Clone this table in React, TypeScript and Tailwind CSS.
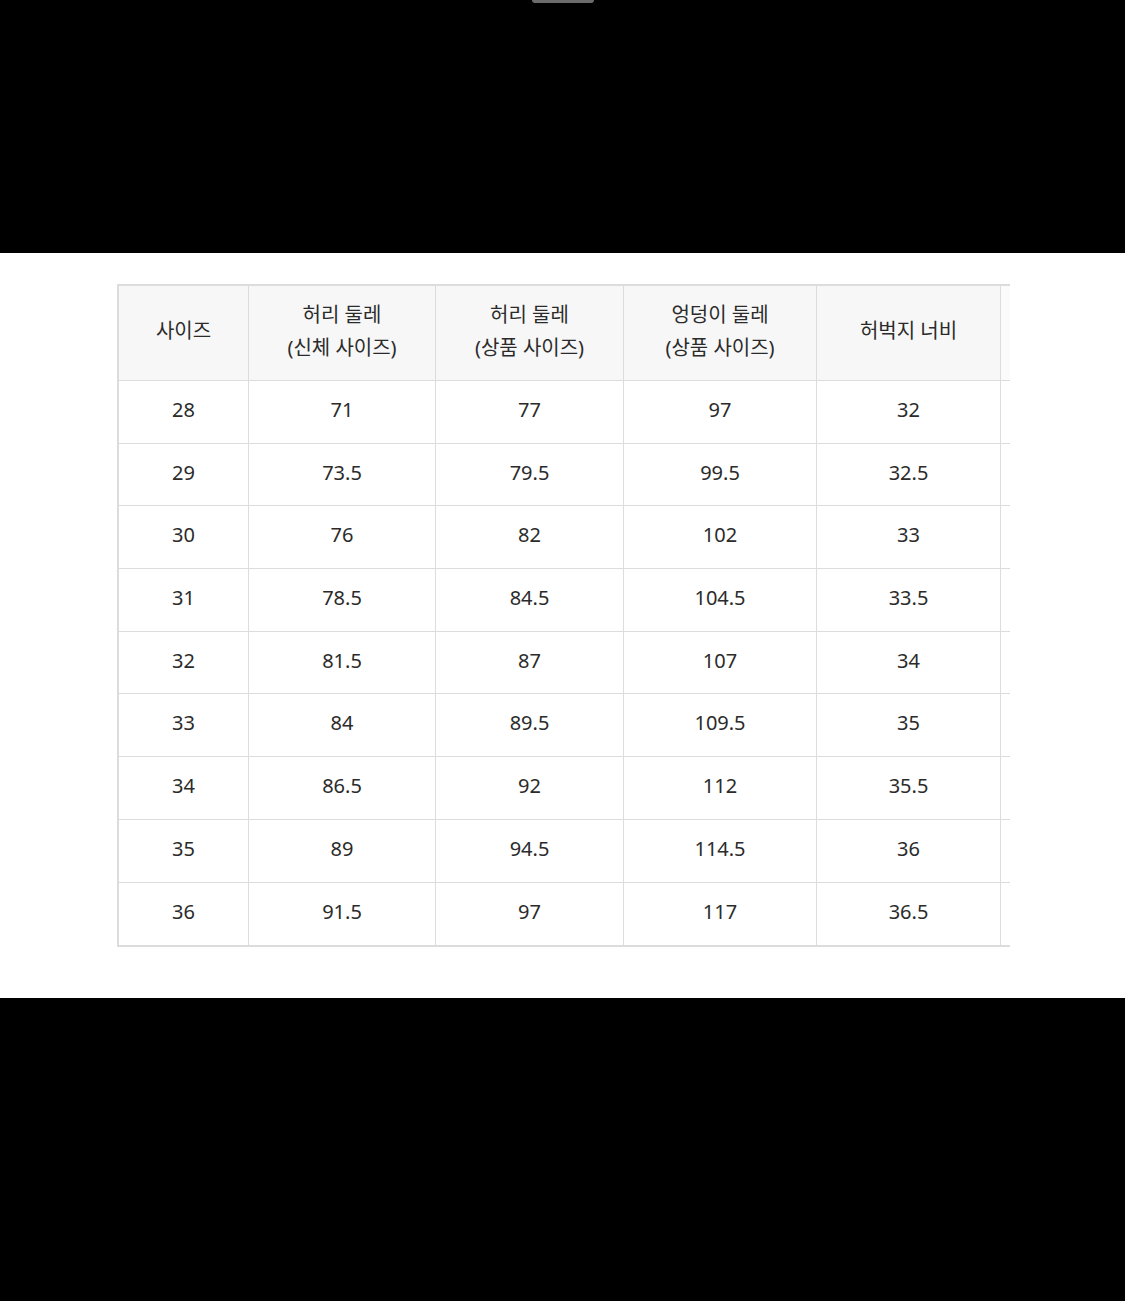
const HEAD = [
  ["사이즈"],
  ["허리 둘레", "(신체 사이즈)"],
  ["허리 둘레", "(상품 사이즈)"],
  ["엉덩이 둘레", "(상품 사이즈)"],
  ["허벅지 너비"],
];

const ROWS = [
  ["28", "71", "77", "97", "32"],
  ["29", "73.5", "79.5", "99.5", "32.5"],
  ["30", "76", "82", "102", "33"],
  ["31", "78.5", "84.5", "104.5", "33.5"],
  ["32", "81.5", "87", "107", "34"],
  ["33", "84", "89.5", "109.5", "35"],
  ["34", "86.5", "92", "112", "35.5"],
  ["35", "89", "94.5", "114.5", "36"],
  ["36", "91.5", "97", "117", "36.5"],
];

const WIDTHS = ["w-[130px]", "w-[187px]", "w-[188px]", "w-[193px]", "w-[184px]"];

export default function App() {
  return (
    <div
      className="min-h-[1301px] bg-black text-[#2b2b2b]"
      style={{ fontFamily: '"Noto Sans", "Noto Sans CJK KR", sans-serif' }}
    >
      {/* top handle */}
      <div className="flex h-[253px] justify-center">
        <div className="h-[3px] w-[62px] rounded-b-sm bg-[#6b6b6b]" />
      </div>

      <div className="h-[745px] bg-white pt-[31px]">
        <div className="ml-[117px] w-[893px] border-b-2 border-l-2 border-t-2 border-[#dcdcdc]">
          {/* header */}
          <div className="flex h-[95px] border-b border-[#dcdcdc] bg-[#f7f7f7]">
            {HEAD.map((lines, i) => (
              <div
                key={i}
                className={`${WIDTHS[i]} flex shrink-0 flex-col items-center justify-center border-r border-[#dcdcdc] pb-[5px] text-[20px] leading-[33px]`}
              >
                {lines.map((l) => (
                  <span key={l}>{l}</span>
                ))}
              </div>
            ))}
            <div className="flex-1 bg-[#fbfbfb]" />
          </div>

          {ROWS.map((row, r) => (
            <div
              key={row[0]}
              className={`flex h-[62.7px] ${r < ROWS.length - 1 ? "border-b border-[#dcdcdc]" : ""}`}
            >
              {row.map((v, i) => (
                <div
                  key={i}
                  className={`${WIDTHS[i]} flex shrink-0 items-center justify-center border-r border-[#dcdcdc] pb-[4px] text-[20px] leading-[28px]`}
                >
                  {v}
                </div>
              ))}
              <div className="flex-1" />
            </div>
          ))}
        </div>
      </div>
    </div>
  );
}
